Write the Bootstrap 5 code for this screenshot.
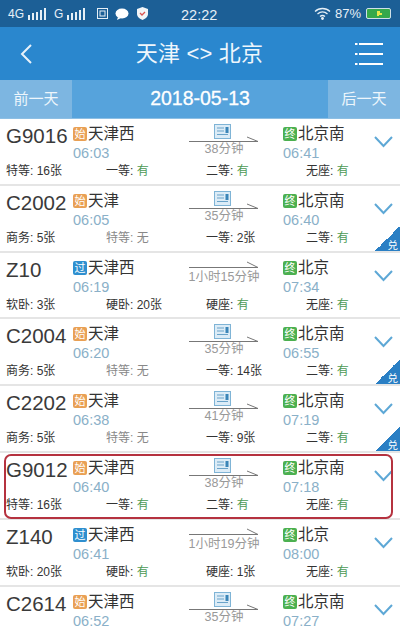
<!DOCTYPE html>
<html lang="zh"><head><meta charset="utf-8">
<link href="https://cdn.jsdelivr.net/npm/bootstrap@5.3.0/dist/css/bootstrap.min.css" rel="stylesheet">
<style>
html,body{width:400px;height:626px;overflow:hidden;background:#fff}
body{font-family:"Liberation Sans","Noto Sans CJK SC",sans-serif;color:#333}
.sbar{height:27px;background:#1c5f96;color:#e6eff6;font-size:12px;padding:0 8px}
.sbar .clk{font-size:14.5px;position:absolute;left:181px;top:5px}
.sleft{gap:3px}
.sright{margin-left:auto;gap:4px;font-size:13px}
.hdr{height:53px;background:#2a87ce;color:#eef6fc;font-size:22px;padding:0 17px 0 20px}
.hdr .ttl{flex:1;text-align:center;padding-left:11px;letter-spacing:.2px}
.dbar{height:39px;background:#56a3dc;color:#fff;border-bottom:1px solid #8dbfe4}
.dside{width:72px;height:100%;background:#7db6e1;font-size:15px;color:#eef6fc}
.dmid{flex:1;font-size:19.5px;-webkit-text-stroke:.3px #fff;text-align:center}
.tlist{height:507px;overflow:hidden}
.trow{height:66.8px;border-bottom:2px solid #e5e5e5;position:relative;padding:6px 0 0 6px}
.ttop{height:38px}
.tno{width:67px;font-size:20.5px;line-height:21px;color:#3a3a3a}
.tst{width:116px;font-size:15.5px;line-height:18px}
.tag{display:inline-block;width:14px;height:14px;border-radius:2px;color:#fff;font-size:11px;line-height:14px;text-align:center;vertical-align:1px;margin-right:1px}
.tg-s{background:#e9a054}.tg-g{background:#2f8fcf}.tg-e{background:#4cb050}
.ttime{font-size:14.5px;line-height:16px;color:#8ab0c8;padding:2px 0 0 0;display:block}
.tmid{width:70px;position:relative;color:#999;font-size:12.5px;text-align:center;height:38px;margin-right:24px;top:-2px}
.tmid svg{display:block}
.tmid .dur{position:absolute;left:-2px;right:-2px;top:20px;line-height:13px;white-space:nowrap}
.tmid.nopic svg{margin-top:3px}
.tmid.nopic .dur{top:14px;left:-6px;right:-6px}
.tarr{width:100px;font-size:15.5px;line-height:18px}
.tseat{font-size:12px;line-height:16px;color:#333;margin:0 0 0 -5px;width:400px}
.tseat>div{width:100px;flex:none;padding:0 0 0 5px;white-space:nowrap}
.ok{color:#4c9a55}.no{color:#888}
.chev{position:absolute;right:7px;top:17px}
.corner{position:absolute;right:0;bottom:0;width:25px;height:25px;background:linear-gradient(135deg,transparent 50%,#2a7fc4 50%);color:#fff;font-size:10.5px;line-height:12px;text-align:right;padding:13px 2px 0 0}
.redbox{position:absolute;left:4px;right:7px;top:1px;bottom:-1px;border:2px solid #b5323f;border-radius:7px}
</style></head><body>
<div class="sbar d-flex align-items-center position-relative">
<div class="d-flex align-items-center sleft"><span>4G</span>
<svg width="20" height="12" fill="#e6eff6"><rect x="1" y="7" width="2" height="5"/><rect x="5" y="5" width="2" height="7"/><rect x="9" y="4" width="2" height="8"/><rect x="13" y="2" width="2" height="10"/><rect x="17" y="0" width="2" height="12"/></svg>
<span class="ms-1">G</span>
<svg width="20" height="12" fill="#e6eff6"><rect x="1" y="7" width="2" height="5"/><rect x="5" y="5" width="2" height="7"/><rect x="9" y="4" width="2" height="8"/><rect x="13" y="2" width="2" height="10"/><rect x="17" y="0" width="2" height="12"/></svg>
<svg class="ms-2" width="11" height="11"><rect x=".5" y=".5" width="10" height="10" fill="none" stroke="#e6eff6"/><rect x="3" y="3" width="5" height="5" fill="none" stroke="#e6eff6"/></svg>
<svg class="ms-1" width="14" height="12" fill="#fff"><ellipse cx="7" cy="5.500" rx="6.500" ry="5"/><path d="M3 9l-1 3 4-2z"/></svg>
<svg class="ms-1" width="13" height="13"><path d="M6.500 0L12 2v5c0 3-3 5-5.500 6C4 12 1 10 1 7V2z" fill="#f2f5f7"/><path d="M4 6l2 2 3-3" fill="none" stroke="#d9534f" stroke-width="1.300"/></svg></div>
<span class="clk">22:22</span>
<div class="d-flex align-items-center sright">
<svg width="17" height="13" fill="none" stroke="#e6eff6" stroke-width="1.300"><path d="M1 4.500C5 .5 12 .5 16 4.500M3.500 7C6.500 4.300 10.500 4.300 13.500 7M6 9.500C7.500 8.300 9.500 8.300 11 9.500"/><circle cx="8.500" cy="11.500" r=".8" fill="#e6eff6"/></svg>
<span>87%</span>
<svg width="27" height="11"><rect x="1.500" y=".5" width="24" height="10" rx="1.500" fill="#35a84a" stroke="#cfe0e8"/><path d="M12 3h3v2h2v2h-3v1h-2z" fill="#e8e84a"/></svg></div>
</div>
<div class="hdr d-flex align-items-center">
<svg width="13" height="20" fill="none" stroke="#e8f2fa" stroke-width="2"><path d="M11 1L2 10l9 9"/></svg>
<div class="ttl">天津 &lt;&gt; 北京</div>
<svg width="28" height="22" fill="#fff"><rect x="0" y="0" width="2.500" height="2"/><rect x="0" y="10" width="2.500" height="2"/><rect x="0" y="20" width="2.500" height="2"/><rect x="4" y="0" width="24" height="2"/><rect x="4" y="10" width="24" height="2"/><rect x="4" y="20" width="24" height="2"/></svg>
</div>
<div class="dbar d-flex align-items-center">
<div class="dside d-flex align-items-center justify-content-center">前一天</div>
<div class="dmid">2018-05-13</div>
<div class="dside d-flex align-items-center justify-content-center">后一天</div>
</div>
<div class="tlist" id="L"></div>
<script>
var pic='<svg width="70" height="24" fill="none"><rect x="25.500" y="1.500" width="16" height="14" fill="#dcecf7" stroke="#7fb4d6"/><path d="M28 5h7M28 8h7M28 11.500h11" stroke="#6aa3c9"/><rect x="36.500" y="4" width="3" height="6" fill="#3b85b8"/><path d="M0 18.500H69L58 14" stroke="#777"/></svg>';
var nopic='<svg width="70" height="14" fill="none"><path d="M0 7.500H69L58 2" stroke="#777"/></svg>';
var chev='<svg class="chev" width="19" height="12" fill="none" stroke="#5ea8d6" stroke-width="2"><path d="M1 1l8.500 9L18 1"/></svg>';
var D=[
['G9016','s','天津西','06:03','38分钟','北京南','06:41',['特等: 16张','一等: @有','二等: @有','无座: @有'],0],
['C2002','s','天津','06:05','35分钟','北京南','06:40',['商务: 5张','~特等: 无','一等: 2张','二等: @有'],1],
['Z10','g','天津西','06:19','1小时15分钟','北京','07:34',['软卧: 3张','硬卧: 20张','硬座: @有','无座: @有'],0],
['C2004','s','天津','06:20','35分钟','北京南','06:55',['商务: 5张','~特等: 无','一等: 14张','二等: @有'],1],
['C2202','s','天津','06:38','41分钟','北京南','07:19',['商务: 5张','~特等: 无','一等: 9张','二等: @有'],1],
['G9012','s','天津西','06:40','38分钟','北京南','07:18',['特等: 16张','一等: @有','二等: @有','无座: @有'],0,1],
['Z140','g','天津西','06:41','1小时19分钟','北京','08:00',['软卧: 20张','硬卧: @有','硬座: 1张','无座: @有'],0],
['C2614','s','天津西','06:52','35分钟','北京南','07:27',[],0]];
var T={s:'始',g:'过'};
document.getElementById('L').innerHTML=D.map(function(r){
var lng=r[4].length>5;
var seats=r[7].map(function(s){
 if(s[0]=='~')return '<div class="no">'+s.slice(1)+'</div>';
 return '<div>'+s.replace(/@(.*)/,'<span class="ok">$1</span>')+'</div>';}).join('');
return '<div class="trow"><div class="ttop d-flex"><div class="tno">'+r[0]+'</div><div class="tst"><span class="tag tg-'+r[1]+'">'+T[r[1]]+'</span>'+r[2]+'<span class="ttime">'+r[3]+'</span></div>'+
'<div class="tmid '+(lng?'nopic':'')+'">'+(lng?nopic:pic)+'<div class="dur">'+r[4]+'</div></div>'+
'<div class="tarr"><span class="tag tg-e">终</span>'+r[5]+'<span class="ttime">'+r[6]+'</span></div></div>'+
'<div class="tseat d-flex">'+seats+'</div>'+chev+(r[8]?'<div class="corner">兑</div>':'')+(r[9]?'<div class="redbox"></div>':'')+'</div>';
}).join('');
</script>
<script src="https://cdn.jsdelivr.net/npm/bootstrap@5.3.0/dist/js/bootstrap.bundle.min.js"></script>
</body></html>
